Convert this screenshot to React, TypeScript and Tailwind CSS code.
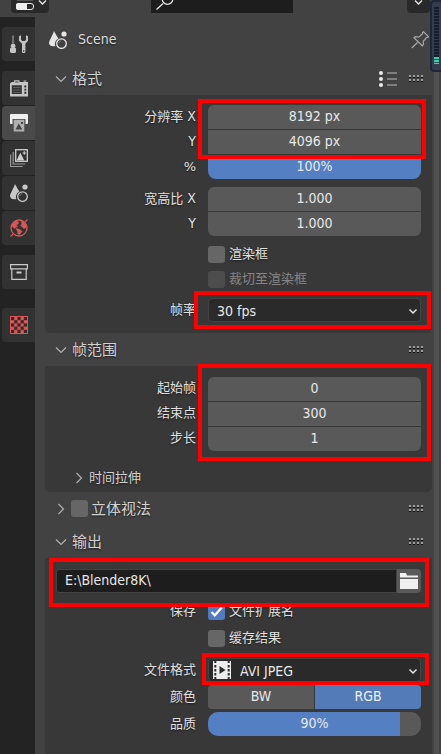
import type { ReactNode } from "react";

const shadow = "[text-shadow:0_1px_2px_rgba(0,0,0,0.6)]";
const latin = "font-['DejaVu_Sans_Condensed','DejaVu_Sans',sans-serif] text-[14px]";
const fieldBase = `block h-6 w-full bg-[#595959] pb-[2px] text-center text-[#e8e8e8] outline-none ${latin}`;
const selectBase = `block h-6 w-full appearance-none rounded-[4px] border border-[#444444] bg-[#2a2a2a] pb-[2px] text-[#e8e8e8] outline-none ${latin}`;

/* ---------- icons ---------- */

function Chevron({ className, right = false }: { className: string; right?: boolean }) {
  return (
    <svg viewBox="0 0 12 12" className={className} fill="none" stroke="currentColor" strokeWidth="1.2" aria-hidden="true">
      <path d={right ? "M3.5 1 8.5 6l-5 5" : "M1 3.5 6 8.5l5-5"} />
    </svg>
  );
}

function SelectArrow() {
  return (
    <svg viewBox="0 0 10 10" className="pointer-events-none absolute top-2 right-[3px] size-[10px]" fill="none" stroke="#e6e6e6" strokeWidth="1.5" aria-hidden="true">
      <path d="m1.5 3.5 3.5 3.5 3.5-3.5" />
    </svg>
  );
}

function Grip() {
  return (
    <svg viewBox="0 0 15 8" className="h-2 w-[15px]" shapeRendering="crispEdges" aria-hidden="true">
      {[0, 4, 8, 12].map((x) => (
        <g key={x}>
          <path d={`M${x} 2h2v1h-2zM${x} 6h2v1h-2z`} fill="#101010" />
          <path d={`M${x} 0h2v2h-2zM${x} 4h2v2h-2z`} fill="#a0a0a0" />
        </g>
      ))}
    </svg>
  );
}

function ToolIcon() {
  return (
    <svg viewBox="0 0 18 18" className="size-[18px]" aria-hidden="true">
      <path d="M3 0.500v9" stroke="#8f8f8f" strokeWidth="1.400" />
      <path d="M1.500 9h3.200l1 2.200-1 1 1.300 1.300v3c0 .8-.7 1.500-1.500 1.500h-3C.7 18 0 17.300 0 16.500v-3l1.500-1.300-1-1z" fill="#c4c4c4" />
      <path d="M9 1.200v4.600l3 3V16.500a1.700 1.700 0 0 0 3.400 0V8.800l2.600-3V1.200L16 .3v4.400l-1.200 1.200h-2.400L11 4.700V.3z" fill="#c4c4c4" />
      <circle cx="13.700" cy="16" r=".8" fill="#333" />
    </svg>
  );
}

function RenderIcon() {
  return (
    <svg viewBox="0 0 18 18" className="size-[18px]" aria-hidden="true">
      <path d="M0 4.500 1.500 3H4V1.200h5.500V3H18v14.500H0z" fill="#c4c4c4" />
      <path d="M5.200 2.400h3.200V3.600H5.200zM1.800 6.300h10v8.700h-10zM14.300 6.500h2v2h-2zM14.300 9.800h2v1.800h-2zM14.300 12.800h2v2h-2z" fill="#333" />
      <path d="M3 8.500h7.500M3 11h7.500M3 13.500h7.500" stroke="#5c5c5c" />
      <path d="M13.500 1.200h2.800V3h-2.800z" fill="#858585" />
    </svg>
  );
}

function OutputIcon() {
  return (
    <svg viewBox="0 0 18 18" className="size-[18px]" aria-hidden="true">
      <path d="M1 0h16a1 1 0 0 1 1 1v8a1 1 0 0 1-1 1h-1.500V5h-13v5H1a1 1 0 0 1-1-1V1a1 1 0 0 1 1-1z" fill="#eee" />
      <path d="M3.700 5.800h10.600V17.500H3.700z" fill="#b0b0b0" />
      <path d="m5.500 15.500 3.300-6 3.500 6zM11 8h2v2h-2z" fill="#444" />
    </svg>
  );
}

function ViewLayerIcon() {
  return (
    <svg viewBox="0 0 18 18" className="size-[18px]" aria-hidden="true">
      <path d="M.6 5.500v12h12.200M3.200 3v12h12" fill="none" stroke="#999" strokeWidth="1.200" />
      <rect x="5.700" y=".7" width="11.600" height="11.600" fill="none" stroke="#cfcfcf" strokeWidth="1.300" />
      <path d="m6.500 11.500 3.800-7.700 4 7.700z" fill="#cfcfcf" />
      <path d="M14.300 2.300v3.400M12.600 4H16" stroke="#cfcfcf" strokeWidth="1.100" />
    </svg>
  );
}

function SceneIcon({ className }: { className: string }) {
  return (
    <svg viewBox="0 0 18 18" className={className} aria-hidden="true">
      <path d="M5 0c2 4 4.500 7.500 4.500 7.500A6 6 0 0 0 6.300 15C3 16 0 14.500 0 12 0 10 3.500 4.500 5 0z" fill="currentColor" />
      <circle cx="15" cy="3" r="2.600" fill="currentColor" />
      <circle cx="12.500" cy="12.600" r="4.800" fill="none" stroke="currentColor" strokeWidth="1.300" />
      <path d="M9.800 12a3 3 0 0 1 2.400-2.400" fill="none" stroke="#777" />
    </svg>
  );
}

function WorldIcon() {
  return (
    <svg viewBox="0 0 18 18" className="size-[18px]" fill="none" stroke="#d95757" aria-hidden="true">
      <circle cx="9" cy="9" r="8" strokeWidth="1.300" />
      <path d="M.5 17.500 3.200 15M15 3.200 17.500.5" strokeWidth="1.200" />
      <path d="M2 5.500 5.500 2l2.500.5.500 2L6.500 6l1 2H5.800L5 9.500 2.500 8zM11 2l3.500 1.500 2 3-1 2.500-2 .5L12 7.500l-1.500-1L12 5zM6 9.500l4 1 2 2-2.500 3L8 15l-.5-2.500z" fill="#d95757" strokeWidth=".5" />
    </svg>
  );
}

function CollectionIcon() {
  return (
    <svg viewBox="0 0 18 18" className="size-[18px]" fill="none" stroke="#cacaca" strokeWidth="1.200" aria-hidden="true">
      <path d="M.6 1.600h16.800v4.200H.6zM1.800 6v10.400h14.400V6" />
      <path d="M6.500 9.500h5" strokeWidth="2" />
    </svg>
  );
}

function TextureIcon() {
  const cells = Array.from({ length: 25 }, (_, i) => i).filter((i) => i % 2 === 1);
  return (
    <svg viewBox="0 0 18 18" className="size-[18px]" aria-hidden="true">
      <rect x=".5" y=".5" width="17" height="17" fill="#3a2828" stroke="#d95757" />
      {cells.map((i) => (
        <rect key={i} x={1 + (i % 5) * 3.2} y={1 + Math.floor(i / 5) * 3.2} width="3.200" height="3.200" fill="#d95757" />
      ))}
    </svg>
  );
}

function PinIcon() {
  return (
    <svg viewBox="0 0 18 18" className="size-[18px]" fill="none" stroke="#a6a6a6" strokeWidth="1.200" aria-hidden="true">
      <path d="m.8 17 5.700-5.500M3 6.800l8.200 8 1.300-1.300-.3-3.200 3.300-3.800 1.500-.3.300-.8L12.500.8l-.8.500-.2 1.400-3.700 3.500-3.500-.5z" />
    </svg>
  );
}

function PresetIcon() {
  return (
    <svg viewBox="0 0 18 18" className="size-[18px]" aria-hidden="true">
      {[3, 9, 15].map((y) => (
        <g key={y}>
          <circle cx="2" cy={y} r="2" fill="#ececec" />
          <path d={`M8 ${y}h10`} stroke="#a8a8a8" strokeWidth="1.200" />
        </g>
      ))}
    </svg>
  );
}

function FilmIcon() {
  return (
    <svg viewBox="0 0 18 18" className="pointer-events-none absolute top-[3px] left-[5px] size-[18px]" aria-hidden="true">
      <path d="M0 0h18v18H0z" fill="#ececec" />
      <path d="M1.300 0h2v2h-2zM1.300 4h2v2.500h-2zM1.300 8h2v2.500h-2zM1.300 12h2v2.500h-2zM1.300 16h2v2h-2zM14.700 0h2v2h-2zM14.700 4h2v2.500h-2zM14.700 8h2v2.500h-2zM14.700 12h2v2.500h-2zM14.700 16h2v2h-2zM6.500 5l6 4-6 4z" fill="#2a2a2a" />
    </svg>
  );
}

function FolderIcon() {
  return (
    <svg viewBox="0 0 18 16" className="h-4 w-[18px]" fill="#f0f0f0" aria-hidden="true">
      <path d="M0 4.500V0h6l1 2.500h11v2zM0 6h18v10H0z" />
    </svg>
  );
}

/* ---------- building blocks ---------- */

function Highlight({ className }: { className: string }) {
  return <span className={`pointer-events-none absolute z-10 border-4 border-[#ff0000] ${className}`} />;
}

function Row({ label, htmlFor, children }: { label?: ReactNode; htmlFor?: string; children: ReactNode }) {
  return (
    <div className="grid grid-cols-[151px_minmax(0,1fr)] gap-3 pr-[11px]">
      <label htmlFor={htmlFor} className={`h-6 text-right leading-6 whitespace-nowrap ${shadow}`}>
        {label}
      </label>
      {children}
    </div>
  );
}

function NumberRow({ id, label, axis, value, round = "" }: { id: string; label?: string; axis?: string; value: string; round?: string }) {
  return (
    <Row
      htmlFor={id}
      label={
        <span className="block leading-[22px]">
          {label}
          {label && axis ? " " : ""}
          {axis && <span className={latin}>{axis}</span>}
        </span>
      }
    >
      <input id={id} type="text" defaultValue={value} className={`${fieldBase} ${round}`} />
    </Row>
  );
}

function SliderRow({ id, label, value, round, fill }: { id: string; label: ReactNode; value: number; round: string; fill: string }) {
  return (
    <Row label={label} htmlFor={id}>
      <div className={`relative h-6 overflow-hidden bg-[#595959] ${round}`}>
        <div className={`h-full bg-[#557fc3] ${fill}`} />
        <span className={`absolute inset-0 text-center leading-[22px] text-[#e8e8e8] ${latin}`}>{value}%</span>
        <input id={id} type="range" min={0} max={100} defaultValue={value} className="absolute inset-0 h-full w-full opacity-0" />
      </div>
    </Row>
  );
}

function Check({ id, checked = false, disabled = false }: { id: string; checked?: boolean; disabled?: boolean }) {
  return (
    <span className="relative flex size-[17px]">
      <input
        id={id}
        type="checkbox"
        defaultChecked={checked}
        disabled={disabled}
        className="size-[17px] appearance-none rounded-[3px] bg-[#666666] checked:bg-[#527bbd] disabled:bg-[#4d4d4d]"
      />
      {checked && (
        <svg viewBox="0 0 17 17" className="pointer-events-none absolute inset-0" fill="none" stroke="#fff" strokeWidth="2.200" aria-hidden="true">
          <path d="m3.500 9 3.300 3.300 7-7.800" />
        </svg>
      )}
    </span>
  );
}

function CheckRow({ id, label, text, checked, disabled }: { id: string; label?: string; text: string; checked?: boolean; disabled?: boolean }) {
  return (
    <Row label={label} htmlFor={id}>
      <div className="flex h-6 items-center gap-1">
        <Check id={id} checked={checked} disabled={disabled} />
        <label htmlFor={id} className={disabled ? "text-[#858585]" : shadow}>
          {text}
        </label>
      </div>
    </Row>
  );
}

function Heading({ title, open = true, checkbox = false, presets = false }: { title: string; open?: boolean; checkbox?: boolean; presets?: boolean }) {
  return (
    <div className="flex h-[33px] items-center pr-2 pl-[10px] text-[#d2d2d2]">
      <button type="button" aria-label={title} className="flex w-[17px] text-[#b0b0b0]">
        <Chevron className="size-3" right={!open} />
      </button>
      {checkbox && (
        <span className="mr-[3px] ml-[-1px] flex">
          <Check id="stereo" />
        </span>
      )}
      {checkbox ? (
        <label htmlFor="stereo" className={`text-[15px] ${shadow}`}>{title}</label>
      ) : (
        <h2 className={`text-[15px] ${shadow}`}>{title}</h2>
      )}
      <div className="ml-auto flex items-center gap-3">
        {presets && (
          <button type="button" aria-label="预设" className="flex">
            <PresetIcon />
          </button>
        )}
        <Grip />
      </div>
    </div>
  );
}

function Tab({ label, active = false, className = "", children }: { label: string; active?: boolean; className?: string; children: ReactNode }) {
  return (
    <button
      type="button"
      aria-label={label}
      className={`flex h-[34px] items-center justify-center rounded-l-[4px] ${active ? "bg-[#4a4a4a]" : "bg-[#323232]"} ${className}`}
    >
      {children}
    </button>
  );
}

export default function App() {
  return (
    <div className="relative flex min-h-screen flex-col overflow-hidden bg-[#424242] font-['DejaVu_Sans','Noto_Sans_CJK_SC',sans-serif] text-[13px] leading-6 text-[#e0e0e0]">
      <header className="flex h-[17px] items-start px-[11px]">
        <button type="button" aria-label="编辑器类型" className="flex h-[13px] w-[38px] items-start gap-1 rounded-b-[4px] bg-[#292929] pl-[5px]">
          <svg viewBox="0 0 18 10" className="h-[10px] w-[18px]" aria-hidden="true">
            <path d="M1 .5h16" stroke="#555" />
            <rect x=".5" y="3.500" width="17" height="6" rx="2.500" fill="#292929" stroke="#eee" />
            <path d="M2 3h9v7H2a2 2 0 0 1-2-2V5a2 2 0 0 1 2-2z" fill="#eee" />
          </svg>
          <svg viewBox="0 0 9 6" className="h-[6px] w-[9px]" fill="none" stroke="#e6e6e6" strokeWidth="1.400" aria-hidden="true">
            <path d="M1 0.500 4.500 4 8 .5" />
          </svg>
        </button>
        <div className="relative ml-[102px] h-[13px] w-[142px]">
          <input type="search" aria-label="搜索" className="block h-[13px] w-full appearance-none bg-[#1d1d1d] outline-none" />
          <svg viewBox="0 0 18 10" className="pointer-events-none absolute top-0 left-[5px] h-[10px] w-[18px]" fill="none" stroke="#e6e6e6" strokeWidth="1.300" aria-hidden="true">
            <path d="M.5 9.500 7 3.500M6.200-1a5.300 5.300 0 1 0 10.600 0" />
          </svg>
        </div>
        <button type="button" aria-label="选项" className="ml-auto flex h-[13px] w-[23px] justify-center rounded-b-[4px] bg-[#292929]">
          <svg viewBox="0 0 9 6" className="h-[6px] w-[9px]" fill="none" stroke="#e6e6e6" strokeWidth="1.400" aria-hidden="true">
            <path d="M1 0.500 4.500 4 8 .5" />
          </svg>
        </button>
      </header>

      <div className="flex flex-1">
        <nav className="flex w-[35px] flex-col gap-px bg-[#232323] pt-[10px] pl-[2px]">
          <Tab label="工具"><ToolIcon /></Tab>
          <Tab label="渲染" className="mt-[9px]"><RenderIcon /></Tab>
          <Tab label="输出" active><OutputIcon /></Tab>
          <Tab label="视图层"><ViewLayerIcon /></Tab>
          <Tab label="场景"><SceneIcon className="size-[18px] text-[#c8c8c8]" /></Tab>
          <Tab label="世界环境"><WorldIcon /></Tab>
          <Tab label="集合" className="mt-[9px]"><CollectionIcon /></Tab>
          <Tab label="纹理" className="mt-[18px]"><TextureIcon /></Tab>
        </nav>

        <main className="flex min-w-0 flex-1 flex-col pl-[10px]">
          <div className="flex h-[45px] items-center pr-3 pl-1">
            <SceneIcon className="size-[18px] text-[#e6e6e6]" />
            <h1 className={`ml-[11px] pb-[2px] text-[#dcdcdc] ${latin} ${shadow}`}>Scene</h1>
            <button type="button" aria-label="固定" className="ml-auto flex">
              <PinIcon />
            </button>
          </div>

          <div className="flex flex-1">
            <div className="flex min-w-0 flex-1 flex-col">
              <Heading title="格式" presets />
              <section className="rounded-b-[5px] bg-[#383838] pt-[10px] pb-[11px]">
                <div className="relative flex flex-col gap-px">
                  <NumberRow id="res-x" label="分辨率" axis="X" value="8192 px" round="rounded-t-[6px]" />
                  <NumberRow id="res-y" axis="Y" value="4096 px" />
                  <SliderRow id="res-pct" label="%" value={100} round="rounded-b-[8px]" fill="w-full" />
                  <Highlight className="-top-[6px] right-[6px] bottom-5 left-[153px]" />
                </div>
                <div className="mt-2 flex flex-col gap-px">
                  <NumberRow id="asp-x" label="宽高比" axis="X" value="1.000" round="rounded-t-[6px]" />
                  <NumberRow id="asp-y" axis="Y" value="1.000" round="rounded-b-[6px]" />
                </div>
                <div className="mt-[6px] flex flex-col gap-px">
                  <CheckRow id="border" text="渲染框" />
                  <CheckRow id="crop" text="裁切至渲染框" disabled />
                </div>
                <div className="relative mt-[7px]">
                  <Row label="帧率" htmlFor="fps">
                    <div className="relative">
                      <select id="fps" className={`${selectBase} pl-2`}>
                        <option>30 fps</option>
                      </select>
                      <SelectArrow />
                    </div>
                  </Row>
                  <Highlight className="-top-[7px] right-[1px] -bottom-[7px] left-[149px]" />
                </div>
              </section>

              <Heading title="帧范围" />
              <section className="rounded-b-[5px] bg-[#383838] pt-[11px]">
                <div className="relative flex flex-col gap-px">
                  <NumberRow id="start" label="起始帧" value="0" round="rounded-t-[6px]" />
                  <NumberRow id="end" label="结束点" value="300" />
                  <NumberRow id="step" label="步长" value="1" round="rounded-b-[6px]" />
                  <Highlight className="-top-[13px] right-[1px] -bottom-[10px] left-[153px]" />
                </div>
                <button type="button" className="mt-3 flex h-[29px] items-center gap-1 pl-7">
                  <Chevron className="size-3 text-[#b0b0b0]" right />
                  <span className={`text-[#d2d2d2] ${shadow}`}>时间拉伸</span>
                </button>
              </section>

              <Heading title="立体视法" open={false} checkbox />
              <Heading title="输出" />
              <section className="flex-1 bg-[#383838] pt-[11px] pb-4">
                <div className="relative flex px-[11px]">
                  <input
                    type="text"
                    aria-label="输出路径"
                    defaultValue={"E:\\Blender8K\\"}
                    className={`h-6 min-w-0 flex-1 rounded-l-[3px] border border-[#444444] bg-[#1d1d1d] pb-[2px] pl-2 text-[#e8e8e8] outline-none ${latin}`}
                  />
                  <button type="button" aria-label="打开文件夹" className="flex h-6 w-6 items-center justify-center rounded-r-[4px] bg-[#595959]">
                    <FolderIcon />
                  </button>
                  <Highlight className="-top-[11px] right-[3px] -bottom-[14px] left-[4px]" />
                </div>
                <div className="mt-[6px] flex flex-col gap-[3px]">
                  <CheckRow id="ext" label="保存" text="文件扩展名" checked />
                  <CheckRow id="cache" text="缓存结果" />
                </div>
                <div className="mt-2 flex flex-col gap-[3px]">
                  <div className="relative">
                    <Row label="文件格式" htmlFor="format">
                      <div className="relative">
                        <select id="format" className={`${selectBase} pl-[31px]`}>
                          <option>AVI JPEG</option>
                        </select>
                        <FilmIcon />
                        <SelectArrow />
                      </div>
                    </Row>
                    <Highlight className="-top-[5px] right-[3px] -bottom-[3px] left-[157px]" />
                  </div>
                  <Row label="颜色">
                    <div className={`grid grid-cols-2 gap-px leading-[22px] ${latin}`}>
                      <button type="button" className="h-6 rounded-l-[4px] bg-[#595959] pb-[2px] text-[#e8e8e8]">BW</button>
                      <button type="button" className="h-6 rounded-r-[4px] bg-[#527bb8] pb-[2px] text-[#f0f0f0]">RGB</button>
                    </div>
                  </Row>
                  <SliderRow id="quality" label="品质" value={90} round="rounded-[10px]" fill="w-[90%]" />
                </div>
              </section>
            </div>
            <div className="flex w-[9px] justify-center">
              <div className="w-[5px] bg-[#505050]" />
            </div>
          </div>
        </main>
      </div>

      {/* floating level meter docked to the window edge */}
      <div className="absolute top-0 -right-[3px] z-20 flex h-[72px] w-[14px] flex-col justify-end rounded-[4px] border-2 border-[#20263a] bg-[#353b4e] pr-[3px] pb-[6px] pl-[2px]">
        <div className="h-[50px] bg-[repeating-linear-gradient(#171d2c_0_2px,#2b3347_2px_3px)]" />
        <div className="h-[7px] bg-[repeating-linear-gradient(#49c9a8_0_2px,#1f5b55_2px_3px)]" />
      </div>
    </div>
  );
}
